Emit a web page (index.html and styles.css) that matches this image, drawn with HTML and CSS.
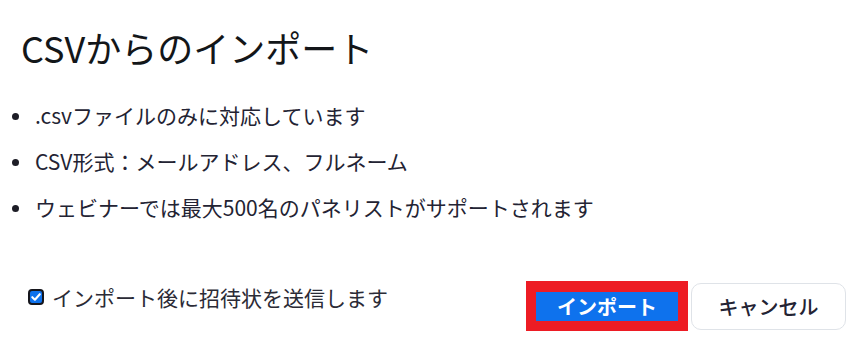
FILE: index.html
```html
<!DOCTYPE html>
<html lang="ja">
<head>
<meta charset="utf-8">
<link rel="stylesheet" href="styles.css">
</head>
<body>
<div class="dialog">
  <h1 class="title">CSVからのインポート</h1>
  <ul class="notes">
    <li>.csvファイルのみに対応しています</li>
    <li>CSV形式：メールアドレス、フルネーム</li>
    <li>ウェビナーでは最大500名のパネリストがサポートされます</li>
  </ul>
  <div class="footer">
    <label class="check-row">
      <span class="checkbox"><svg viewBox="0 0 12 12" width="12" height="12"><path d="M2.3 6.2 L4.9 8.7 L9.8 3.2" fill="none" stroke="#fff" stroke-width="2.1" stroke-linecap="round" stroke-linejoin="round"/></svg></span>
      <span class="check-text">インポート後に招待状を送信します</span>
    </label>
    <div class="actions">
      <button class="btn-primary">インポート</button>
      <button class="btn-secondary">キャンセル</button>
    </div>
  </div>
</div>
</body>
</html>
```
FILE: styles.css
```css
html, body {
  margin: 0;
  padding: 0;
  background: #ffffff;
}
body {
  font-family: "Noto Sans CJK JP", "Noto Sans", sans-serif;
  color: #232333;
}
.dialog {
  width: 868px;
  height: 355px;
  box-sizing: border-box;
  padding: 23px 22px 0 12px;
}
.title {
  margin: 0 0 0 9px;
  font-size: 36px;
  line-height: 48px;
  font-weight: 400;
  color: #131619;
}
.notes {
  list-style: none;
  margin: 21px 0 0 0;
  padding: 0;
}
.notes li {
  display: flex;
  align-items: center;
  height: 46px;
  line-height: 46px;
  font-size: 21px;
  color: #232333;
}
.notes li::before {
  content: "";
  flex: none;
  width: 7px;
  height: 7px;
  border-radius: 50%;
  background: #1d1d26;
  margin: 2px 16px 0 0;
}
.footer {
  display: flex;
  justify-content: space-between;
  align-items: flex-start;
  margin-top: 51px;
}
.check-row {
  display: flex;
  align-items: center;
  margin: 4px 0 0 16px;
  font-size: 21px;
  line-height: 24px;
  color: #2b2b36;
}
.checkbox {
  flex: none;
  width: 16px;
  height: 16px;
  box-sizing: border-box;
  border: 2px solid #16161c;
  border-radius: 4px;
  background: #0e72ed;
  display: flex;
  align-items: center;
  justify-content: center;
  margin-right: 8px;
}
.actions {
  display: flex;
  align-items: center;
  gap: 3px;
}
.btn-primary {
  font-family: inherit;
  width: 162px;
  height: 50px;
  box-sizing: border-box;
  border: 10px solid #ed1c24;
  border-top-width: 11px;
  background: #0e72ed;
  color: #ffffff;
  font-size: 20px;
  font-weight: 700;
  line-height: 29px;
  padding: 0;
  border-radius: 0;
}
.btn-secondary {
  font-family: inherit;
  width: 155px;
  height: 47px;
  box-sizing: border-box;
  border: 1px solid #dfe3e8;
  border-radius: 10px;
  background: #ffffff;
  color: #232333;
  font-size: 20px;
  font-weight: 500;
  padding: 0;
}
```
